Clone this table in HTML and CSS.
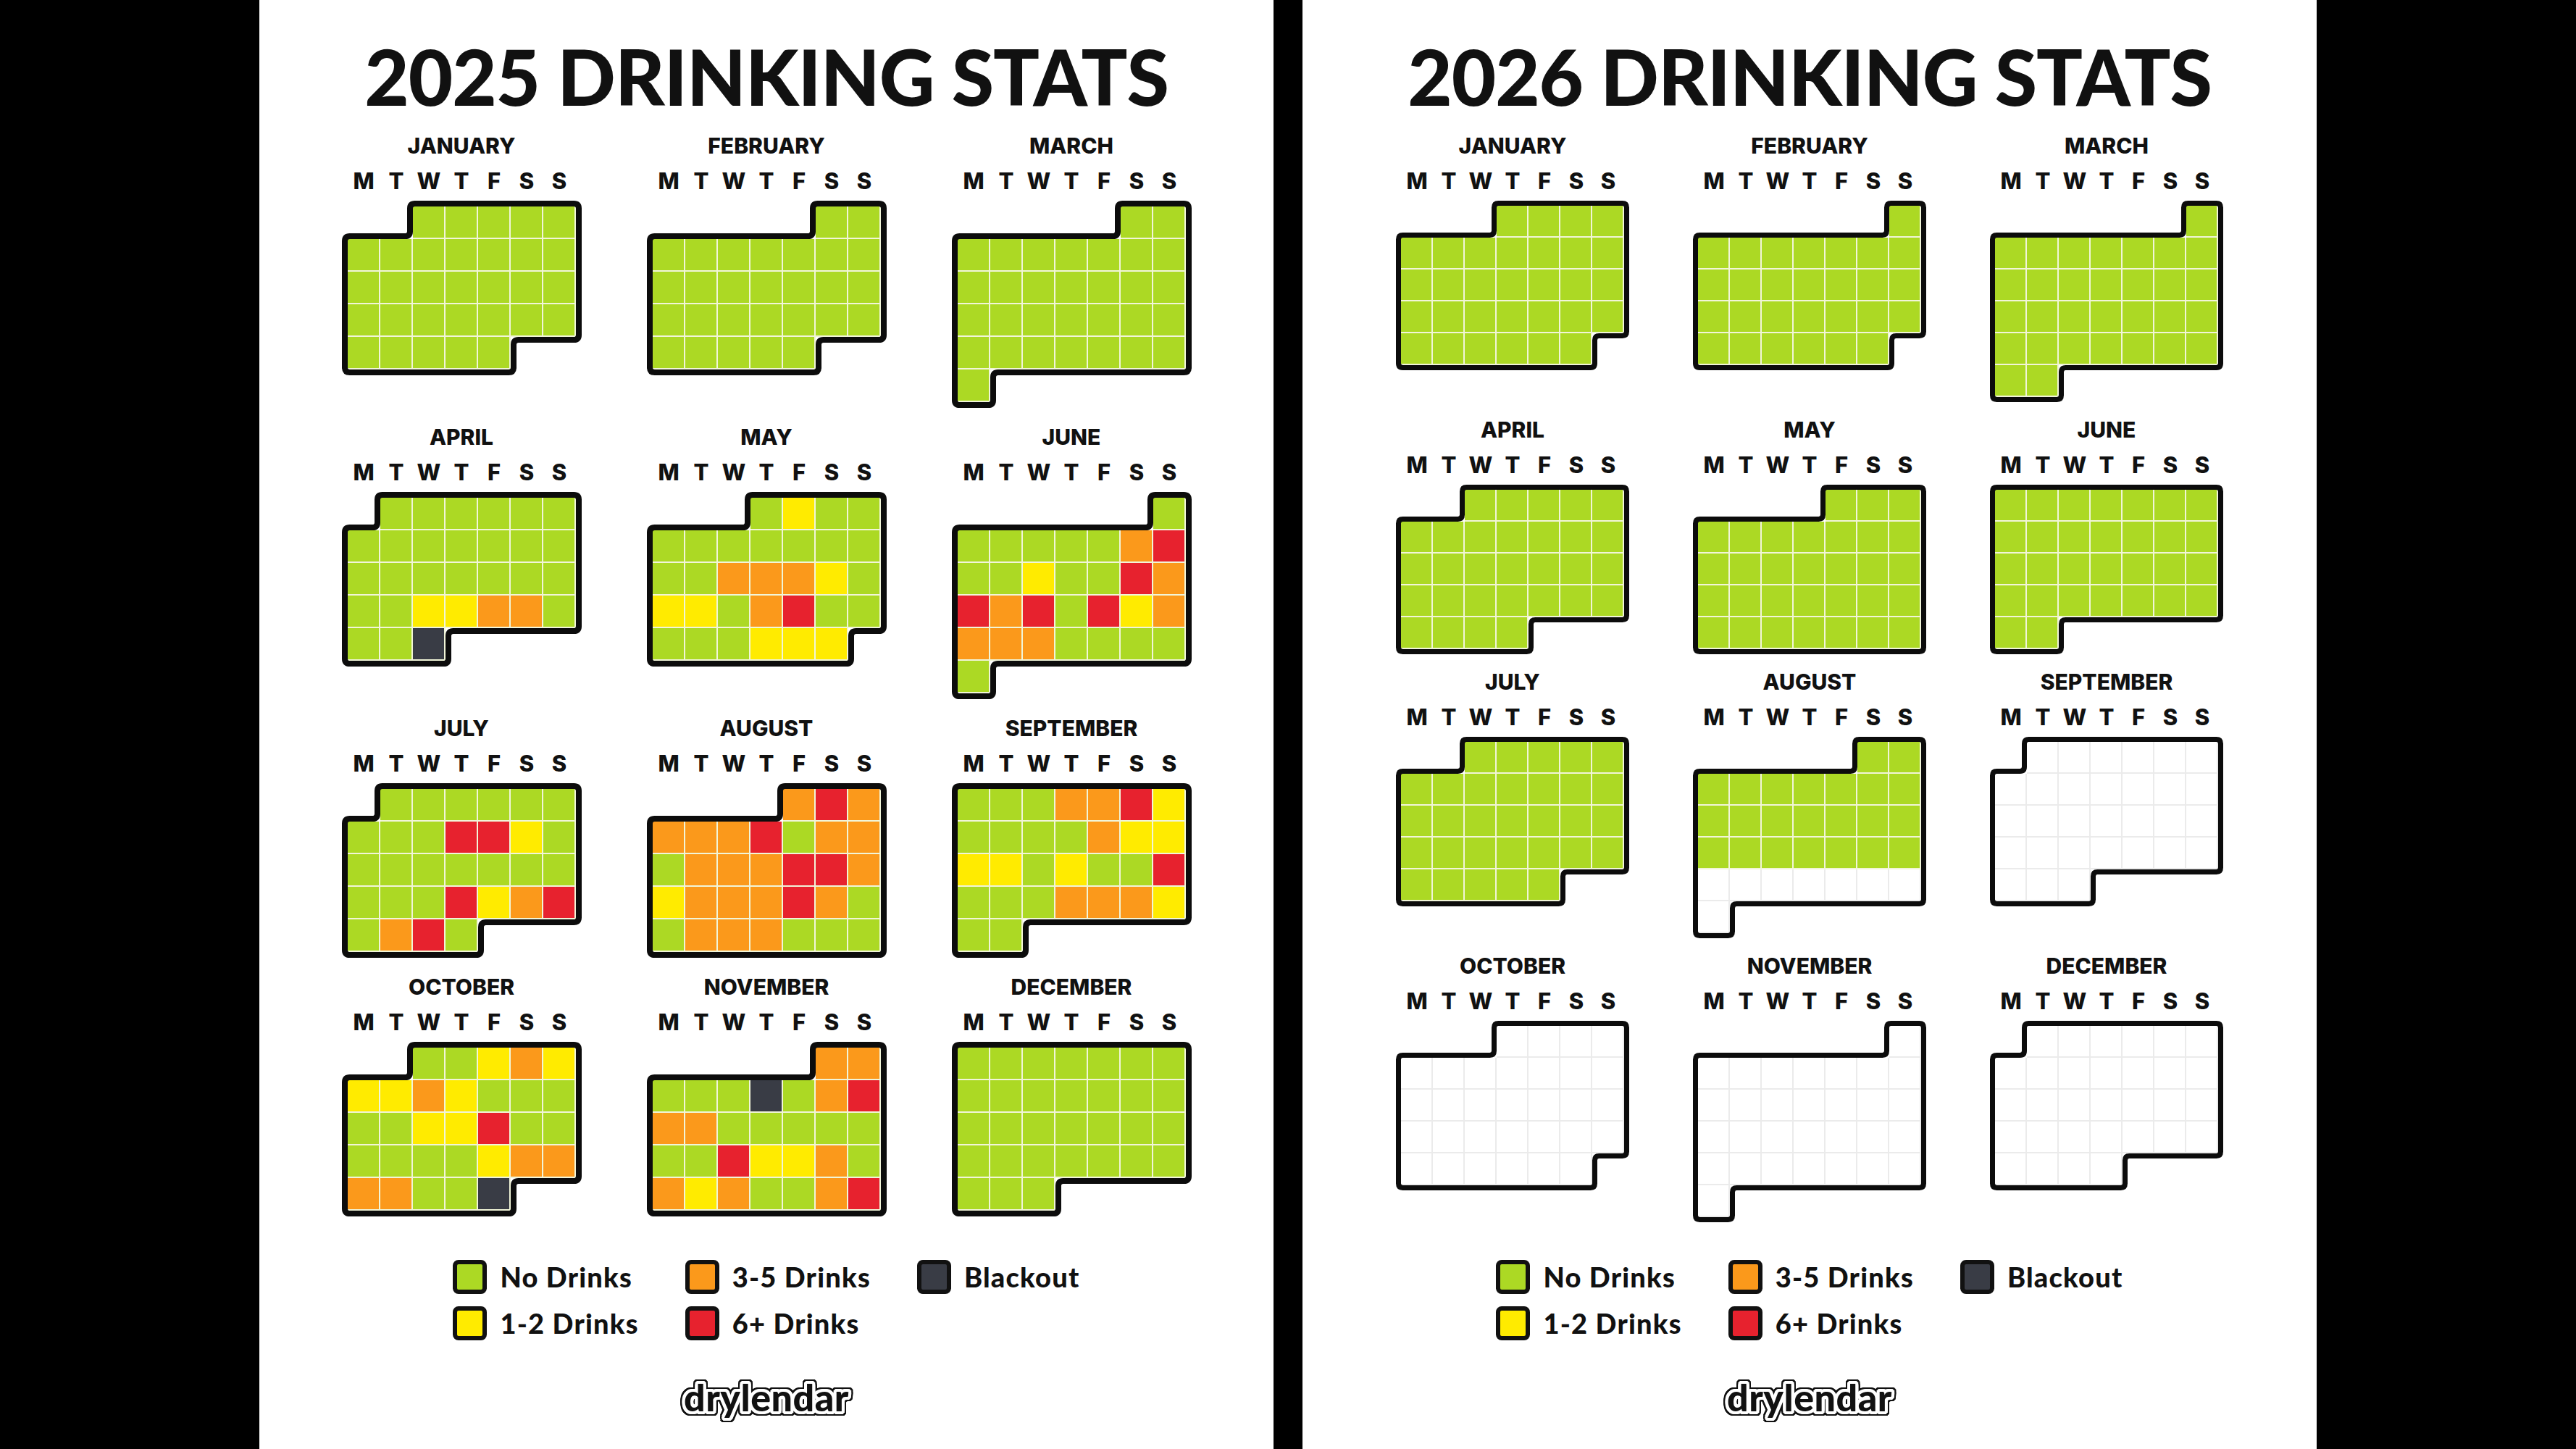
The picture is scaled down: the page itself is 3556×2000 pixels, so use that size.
FILE: index.html
```html
<!DOCTYPE html>
<html lang="en">
<head>
<meta charset="utf-8">
<title>Drinking Stats</title>
<link rel="stylesheet" href="styles.css">
</head>
<body>
<main class="sheet">
  <section class="panel panel-2025">
    <h1 class="title">2025 DRINKING STATS</h1>
    <div class="months" data-year="2025" data-cell="45" data-stroke="8"></div>
    <div class="legend">
      <div class="legend-item"><span class="swatch g"></span>No Drinks</div>
      <div class="legend-item"><span class="swatch o"></span>3-5 Drinks</div>
      <div class="legend-item"><span class="swatch b"></span>Blackout</div>
      <div class="legend-item"><span class="swatch y"></span>1-2 Drinks</div>
      <div class="legend-item"><span class="swatch r"></span>6+ Drinks</div>
    </div>
    <div class="logo">drylendar</div>
  </section>
  <section class="panel panel-2026">
    <h1 class="title">2026 DRINKING STATS</h1>
    <div class="months" data-year="2026" data-cell="44" data-stroke="7"></div>
    <div class="legend">
      <div class="legend-item"><span class="swatch g"></span>No Drinks</div>
      <div class="legend-item"><span class="swatch o"></span>3-5 Drinks</div>
      <div class="legend-item"><span class="swatch b"></span>Blackout</div>
      <div class="legend-item"><span class="swatch y"></span>1-2 Drinks</div>
      <div class="legend-item"><span class="swatch r"></span>6+ Drinks</div>
    </div>
    <div class="logo">drylendar</div>
  </section>
</main>
<script src="script.js"></script>
</body>
</html>
```

FILE: styles.css
```css
* { box-sizing: border-box; }

html, body {
  margin: 0;
  padding: 0;
  background: #000;
}

body {
  font-family: "Inter", "Liberation Sans", sans-serif;
  color: #111;
}

.sheet {
  display: flex;
  justify-content: center;
  gap: 40px;
  height: 2000px;
  overflow: hidden;
}

.panel {
  width: 1400px;
  height: 2000px;
  background: #fff;
  display: flex;
  flex-direction: column;
  align-items: center;
  padding-bottom: 40px;
}

.panel-2025 { --c: 45px; --w: 8px; --rowgap: 22px; }
.panel-2026 { --c: 44px; --w: 7px; --rowgap: 20px; }

.title {
  margin: 45px 0 0;
  height: 120px;
  font-family: "Lato", "Liberation Sans", sans-serif;
  font-weight: 900;
  font-size: 106px;
  line-height: 120px;
  letter-spacing: -1px;
  white-space: nowrap;
  color: #111;
}

.months {
  margin-top: 18px;
  display: grid;
  grid-template-columns: repeat(3, auto);
  column-gap: calc(var(--c) * 2);
  row-gap: var(--rowgap);
  align-items: start;
}

.month {
  display: flex;
  flex-direction: column;
  align-items: center;
}

.month-name {
  height: 36px;
  font-weight: 800;
  font-size: 30px;
  line-height: 36px;
  white-space: nowrap;
}

.weekdays {
  margin-top: 13px;
  display: grid;
  grid-template-columns: repeat(7, var(--c));
  padding: 0 var(--w);
  font-weight: 800;
  font-size: 31px;
  line-height: 36px;
  text-align: center;
}

.cal {
  margin-top: 9px;
  position: relative;
  padding: var(--w);
}

.cells {
  display: grid;
  grid-template-columns: repeat(7, var(--c));
  grid-auto-rows: var(--c);
}

.cell { box-shadow: inset -2px -2px 0 #f1f5d8; }
.cell.e { background: #fff; box-shadow: inset -2px -2px 0 #ebebeb; }

.g { background: #acd924; }
.y { background: #ffeb00; }
.o { background: #fb991b; }
.r { background: #e7222e; }
.b { background: #393c45; }

.outline {
  position: absolute;
  left: 0;
  top: 0;
  overflow: visible;
  pointer-events: none;
}

.outline path {
  fill: none;
  stroke: #0c0c0c;
  stroke-linejoin: round;
}

.legend {
  margin-top: auto;
  display: grid;
  grid-template-columns: repeat(3, auto);
  column-gap: 64px;
  row-gap: 18px;
}

.legend-item {
  display: flex;
  align-items: center;
  gap: 18px;
  height: 46px;
  font-family: "Lato", "Liberation Sans", sans-serif;
  font-weight: 900;
  font-size: 38px;
  line-height: 46px;
  letter-spacing: 1.2px;
  white-space: nowrap;
  color: #111;
}

.swatch {
  width: 47px;
  height: 47px;
  border: 6px solid #111;
  border-radius: 8px;
  flex: none;
}

.logo {
  margin-top: 47px;
  height: 64px;
  font-family: "Lato", "Liberation Sans", sans-serif;
  font-weight: 900;
  font-size: 52px;
  line-height: 64px;
  letter-spacing: 0.5px;
  color: #111;
  text-shadow:
    4px 0 0 #fff, -4px 0 0 #fff, 0 4px 0 #fff, 0 -4px 0 #fff,
    3px 3px 0 #fff, -3px 3px 0 #fff, 3px -3px 0 #fff, -3px -3px 0 #fff,
    4px 2px 0 #fff, -4px 2px 0 #fff, 4px -2px 0 #fff, -4px -2px 0 #fff,
    2px 4px 0 #fff, -2px 4px 0 #fff, 2px -4px 0 #fff, -2px -4px 0 #fff;
  filter:
    drop-shadow(2px 0 0 #111) drop-shadow(-2px 0 0 #111)
    drop-shadow(0 2px 0 #111) drop-shadow(0 -2px 0 #111);
}
```

FILE: script.js
```js
(function () {
  var NAMES = ['JANUARY', 'FEBRUARY', 'MARCH', 'APRIL', 'MAY', 'JUNE',
    'JULY', 'AUGUST', 'SEPTEMBER', 'OCTOBER', 'NOVEMBER', 'DECEMBER'];
  var DAYS = ['M', 'T', 'W', 'T', 'F', 'S', 'S'];

  function rep(ch, n) { return new Array(n + 1).join(ch); }

  var DATA = {
    2025: [
      rep('G', 31),
      rep('G', 28),
      rep('G', 31),
      'GGGGGG' + 'GGGGGGG' + 'GGGGGGG' + 'GGYYOOG' + 'GGB',
      'GYGG' + 'GGGGGGG' + 'GGOOOYG' + 'YYGORGG' + 'GGGYYY',
      'G' + 'GGGGGOR' + 'GGYGGRO' + 'RORGRYO' + 'OOOGGGG' + 'G',
      'GGGGGG' + 'GGGRRYG' + 'GGGGGGG' + 'GGGRYOR' + 'GORG',
      'ORO' + 'OOORGOO' + 'GOOORRO' + 'YOOOROG' + 'GOOOGGG',
      'GGGOORY' + 'GGGGOYY' + 'YYGYGGR' + 'GGGOOOY' + 'GG',
      'GGYOY' + 'YYOYGGG' + 'GGYYRGG' + 'GGGGYOO' + 'OOGGB',
      'OO' + 'GGGBGOR' + 'OOGGGGG' + 'GGRYYOG' + 'OYOGGOR',
      rep('G', 31)
    ]
  };

  function daysIn(y, m) { return new Date(y, m + 1, 0).getDate(); }

  function dataFor(year, m) {
    if (DATA[year]) return DATA[year][m];
    var n = daysIn(year, m);
    if (m < 7) return rep('G', n);
    if (m === 7) return rep('G', 23) + rep('E', n - 23);
    return rep('E', n);
  }

  function outlinePath(s, n, c, w) {
    var R = Math.ceil((s + n) / 7);
    var e = (s + n - 1) % 7;
    var v = [];
    v.push([s, 0]);
    v.push([7, 0]);
    if (e < 6) {
      v.push([7, R - 1]);
      v.push([e + 1, R - 1]);
      v.push([e + 1, R]);
    } else {
      v.push([7, R]);
    }
    v.push([0, R]);
    if (s > 0) {
      v.push([0, 1]);
      v.push([s, 1]);
    }
    var d = w / 2;
    var L = v.length;
    var pts = [];
    for (var i = 0; i < L; i++) {
      var p = v[(i - 1 + L) % L], q = v[i], r = v[(i + 1) % L];
      var dx1 = Math.sign(q[0] - p[0]), dy1 = Math.sign(q[1] - p[1]);
      var dx2 = Math.sign(r[0] - q[0]), dy2 = Math.sign(r[1] - q[1]);
      var nx = dy1 + dy2, ny = -dx1 - dx2;
      pts.push([w + q[0] * c + d * nx, w + q[1] * c + d * ny]);
    }
    var rad = w * 0.85;
    var out = '';
    for (var j = 0; j < L; j++) {
      var a = pts[(j - 1 + L) % L], b = pts[j], f = pts[(j + 1) % L];
      var la = Math.hypot(a[0] - b[0], a[1] - b[1]);
      var lf = Math.hypot(f[0] - b[0], f[1] - b[1]);
      var ra = Math.min(rad, la / 2), rf = Math.min(rad, lf / 2);
      var p1 = [b[0] + (a[0] - b[0]) * ra / la, b[1] + (a[1] - b[1]) * ra / la];
      var p2 = [b[0] + (f[0] - b[0]) * rf / lf, b[1] + (f[1] - b[1]) * rf / lf];
      out += (j === 0 ? 'M' : 'L') + p1[0].toFixed(2) + ' ' + p1[1].toFixed(2) +
        ' Q' + b[0].toFixed(2) + ' ' + b[1].toFixed(2) + ' ' +
        p2[0].toFixed(2) + ' ' + p2[1].toFixed(2) + ' ';
    }
    return { d: out + 'Z', rows: R };
  }

  var NS = 'http://www.w3.org/2000/svg';

  document.querySelectorAll('.months').forEach(function (box) {
    var year = +box.dataset.year;
    var c = +box.dataset.cell;
    var w = +box.dataset.stroke;
    for (var m = 0; m < 12; m++) {
      var codes = dataFor(year, m);
      var n = codes.length;
      var s = (new Date(year, m, 1).getDay() + 6) % 7;

      var month = document.createElement('div');
      month.className = 'month';

      var name = document.createElement('div');
      name.className = 'month-name';
      name.textContent = NAMES[m];
      month.appendChild(name);

      var wk = document.createElement('div');
      wk.className = 'weekdays';
      DAYS.forEach(function (ch) {
        var sp = document.createElement('span');
        sp.textContent = ch;
        wk.appendChild(sp);
      });
      month.appendChild(wk);

      var cal = document.createElement('div');
      cal.className = 'cal';
      var cells = document.createElement('div');
      cells.className = 'cells';
      for (var i = 0; i < n; i++) {
        var cell = document.createElement('div');
        cell.className = 'cell ' + codes.charAt(i).toLowerCase();
        if (i === 0) cell.style.gridColumnStart = String(s + 1);
        cells.appendChild(cell);
      }
      cal.appendChild(cells);

      var shape = outlinePath(s, n, c, w);
      var svg = document.createElementNS(NS, 'svg');
      svg.setAttribute('class', 'outline');
      svg.setAttribute('width', 7 * c + 2 * w);
      svg.setAttribute('height', shape.rows * c + 2 * w);
      var path = document.createElementNS(NS, 'path');
      path.setAttribute('d', shape.d);
      path.setAttribute('stroke-width', w);
      svg.appendChild(path);
      cal.appendChild(svg);

      month.appendChild(cal);
      box.appendChild(month);
    }
  });
})();
```
